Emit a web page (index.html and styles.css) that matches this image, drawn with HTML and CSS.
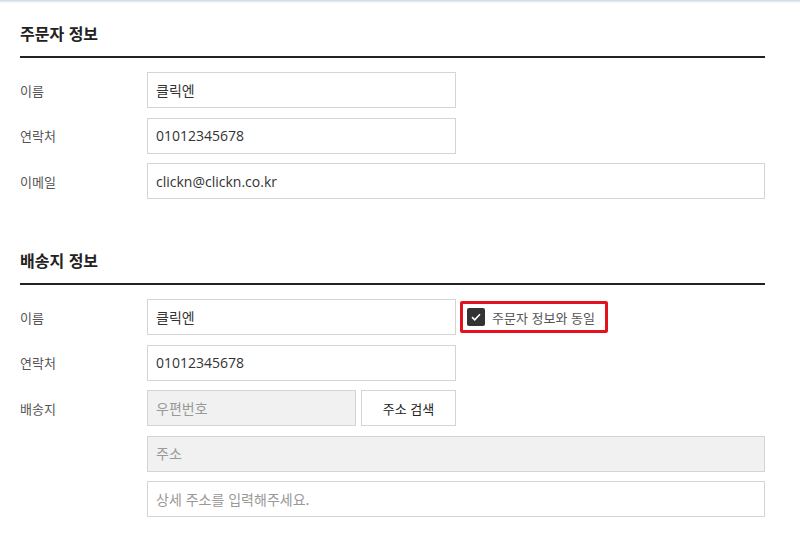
FILE: index.html
```html
<!DOCTYPE html>
<html lang="ko">
  <head>
    <meta charset="UTF-8" />
    <meta name="viewport" content="width=device-width, initial-scale=1.0" />
    <title>주문서 작성</title>
    <link rel="stylesheet" href="styles.css">
  </head>
  <body>
    <div class="top-shadow"></div>
    <div class="order-form">
      <section class="form-section">
        <h2 class="section-title">주문자 정보</h2>
        <div class="form-rows">
          <div class="form-row">
            <label class="row-label">이름</label>
            <div class="row-field">
              <input class="field field-short" type="text" value="클릭엔" />
            </div>
          </div>
          <div class="form-row">
            <label class="row-label">연락처</label>
            <div class="row-field">
              <input class="field field-short" type="text" value="01012345678" />
            </div>
          </div>
          <div class="form-row">
            <label class="row-label">이메일</label>
            <div class="row-field">
              <input class="field field-full" type="text" value="clickn@clickn.co.kr" />
            </div>
          </div>
        </div>
      </section>

      <section class="form-section">
        <h2 class="section-title">배송지 정보</h2>
        <div class="form-rows">
          <div class="form-row">
            <label class="row-label">이름</label>
            <div class="row-field">
              <input class="field field-short" type="text" value="클릭엔" />
              <label class="same-check">
                <span class="check-box">
                  <svg width="10" height="8" viewBox="0 0 10 8">
                    <path d="M1 4.2 L3.7 6.8 L9 1.2" fill="none" stroke="#fff" stroke-width="1.6" />
                  </svg>
                </span>
                주문자 정보와 동일
              </label>
            </div>
          </div>
          <div class="form-row">
            <label class="row-label">연락처</label>
            <div class="row-field">
              <input class="field field-short" type="text" value="01012345678" />
            </div>
          </div>
          <div class="form-row">
            <label class="row-label">배송지</label>
            <div class="row-field">
              <input class="field field-zip" type="text" placeholder="우편번호" disabled />
              <button class="search-btn" type="button">주소 검색</button>
            </div>
          </div>
          <div class="form-row">
            <span class="row-label"></span>
            <div class="row-field">
              <input class="field field-full" type="text" placeholder="주소" disabled />
            </div>
          </div>
          <div class="form-row">
            <span class="row-label"></span>
            <div class="row-field">
              <input class="field field-full" type="text" placeholder="상세 주소를 입력해주세요." />
            </div>
          </div>
        </div>
      </section>
    </div>
  </body>
</html>
```

FILE: styles.css
```css
body {
  margin: 0;
  padding: 0;
  background: #fff;
  font-family: "Noto Sans CJK KR", "Noto Sans", sans-serif;
  color: #333;
}

.top-shadow {
  height: 3px;
  background: linear-gradient(#c9d6e6, #fff);
}

.order-form {
  width: 745px;
  padding: 0 0 0 20px;
}

.form-section {
  margin-bottom: 49px;
}

.section-title {
  margin: 18px 0 0;
  padding-bottom: 11px;
  font-size: 16px;
  font-weight: 700;
  line-height: 24px;
  color: #222;
  border-bottom: 2px solid #222;
}

.form-rows {
  display: flex;
  flex-direction: column;
  gap: 9.5px;
  padding-top: 14px;
}

.form-row {
  display: flex;
  align-items: center;
}

.row-label {
  width: 127px;
  flex-shrink: 0;
  font-size: 13px;
  color: #555;
}

.row-field {
  flex: 1;
  display: flex;
  align-items: center;
  gap: 5px;
}

.field {
  box-sizing: border-box;
  height: 36px;
  padding: 0 8px;
  border: 1px solid #d4d4d4;
  border-radius: 0;
  background: #fff;
  font-family: "Open Sans", "Noto Sans CJK KR", sans-serif;
  font-size: 14px;
  color: #333;
  outline: none;
}

.field::placeholder {
  color: #999;
  font-family: "Noto Sans CJK KR", sans-serif;
}

.field:disabled {
  background: #f1f1f1;
}

.field-short {
  width: 309px;
}

.field-zip {
  width: 209px;
}

.field-full {
  width: 618px;
}

.search-btn {
  box-sizing: border-box;
  width: 95px;
  height: 36px;
  border: 1px solid #d4d4d4;
  background: #fff;
  font-family: "Noto Sans CJK KR", sans-serif;
  font-size: 13px;
  color: #222;
}

.same-check {
  display: flex;
  align-items: center;
  gap: 7px;
  box-sizing: border-box;
  height: 32px;
  padding: 0 10px 0 4px;
  margin-left: -1px;
  border: 3px solid #e4121c;
  border-radius: 2px;
  font-size: 13px;
  color: #555;
}

.check-box {
  display: flex;
  align-items: center;
  justify-content: center;
  width: 18px;
  height: 18px;
  border-radius: 2px;
  background: #333;
}
```
